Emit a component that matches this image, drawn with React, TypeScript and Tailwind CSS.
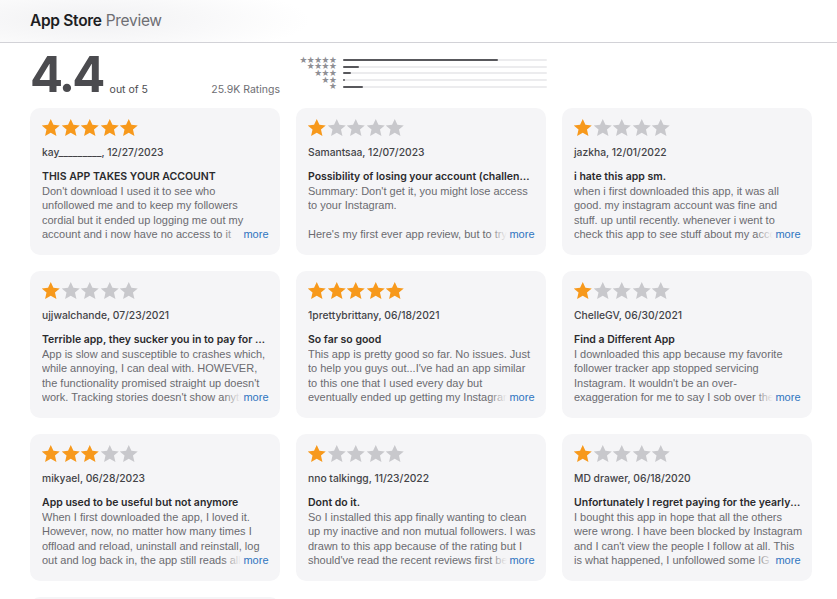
import React from 'react';

type Review = {
    rating: number;
    author: string;
    date: string;
    title: string;
    body: string;
};

const reviews: Review[] = [
    {
        rating: 5,
        author: 'kay_________',
        date: '12/27/2023',
        title: 'THIS APP TAKES YOUR ACCOUNT',
        body: "Don't download I used it to see who unfollowed me and to keep my followers cordial but it ended up logging me out my account and i now have no access to it anymore and the support team never answered.",
    },
    {
        rating: 1,
        author: 'Samantsaa',
        date: '12/07/2023',
        title: 'Possibility of losing your account (challenge required)',
        body: "Summary: Don't get it, you might lose access to your Instagram.\n\nHere's my first ever app review, but to try and warn others about it.",
    },
    {
        rating: 1,
        author: 'jazkha',
        date: '12/01/2022',
        title: 'i hate this app sm.',
        body: 'when i first downloaded this app, it was all good. my instagram account was fine and stuff. up until recently. whenever i went to check this app to see stuff about my account it logged me out.',
    },
    {
        rating: 1,
        author: 'ujjwalchande',
        date: '07/23/2021',
        title: 'Terrible app, they sucker you in to pay for features',
        body: "App is slow and susceptible to crashes which, while annoying, I can deal with. HOWEVER, the functionality promised straight up doesn't work. Tracking stories doesn't show anything at all.",
    },
    {
        rating: 5,
        author: '1prettybrittany',
        date: '06/18/2021',
        title: 'So far so good',
        body: "This app is pretty good so far. No issues. Just to help you guys out...I've had an app similar to this one that I used every day but\neventually ended up getting my Instagram blocked.",
    },
    {
        rating: 1,
        author: 'ChelleGV',
        date: '06/30/2021',
        title: 'Find a Different App',
        body: "I downloaded this app because my favorite follower tracker app stopped servicing Instagram. It wouldn't be an over-\nexaggeration for me to say I sob over the loss of it.",
    },
    {
        rating: 3,
        author: 'mikyael',
        date: '06/28/2023',
        title: 'App used to be useful but not anymore',
        body: 'When I first downloaded the app, I loved it. However, now, no matter how many times I offload and reload, uninstall and reinstall, log out and log back in, the app still reads all zeros.',
    },
    {
        rating: 1,
        author: 'nno talkingg',
        date: '11/23/2022',
        title: 'Dont do it.',
        body: "So I installed this app finally wanting to clean up my inactive and non mutual followers. I was drawn to this app because of the rating but I should've read the recent reviews first before paying.",
    },
    {
        rating: 1,
        author: 'MD drawer',
        date: '06/18/2020',
        title: 'Unfortunately I regret paying for the yearly subscription',
        body: "I bought this app in hope that all the others were wrong. I have been blocked by Instagram and I can't view the people I follow at all. This is what happened, I unfollowed some IG accounts.",
    },
    {
        rating: 1,
        author: 'anonymous',
        date: '05/02/2020',
        title: 'Not worth it',
        body: 'Stopped working after a week.',
    },
];

const histogram = [
    { stars: 5, pct: 76 },
    { stars: 4, pct: 8 },
    { stars: 3, pct: 4 },
    { stars: 2, pct: 1 },
    { stars: 1, pct: 10 },
];

const StarIcon = ({ filled, size }: { filled: boolean; size: number }) => (
    <svg width={size} height={size} viewBox="0 0 24 24" className={filled ? 'text-[#f7991c]' : 'text-[#c8c8cc]'}>
        <path
            fill="currentColor"
            d="M12 1.2l3.3 7.1 7.8.8-5.9 5.2 1.8 7.7L12 18l-7 4 1.8-7.7-5.9-5.2 7.8-.8z"
        />
    </svg>
);

const Stars = ({ rating }: { rating: number }) => (
    <div className="flex items-center -ml-[1px]">
        {[1, 2, 3, 4, 5].map(i => (
            <StarIcon key={i} filled={i <= rating} size={19.5} />
        ))}
    </div>
);

const ReviewCard = ({ review }: { review: Review }) => (
    <div className="bg-[#f5f5f7] rounded-[10px] h-[147px] pl-[12px] pr-[9.5px] pt-[10px] overflow-hidden">
        <Stars rating={review.rating} />
        <div className="mt-[7px] text-[10.3px] leading-[14px] text-[#434347] font-medium">
            {review.author}, {review.date}
        </div>
        <div className="mt-[10px] text-[10.5px] leading-[15px] font-semibold text-[#2a2a2d] truncate pr-[2px]">{review.title}</div>
        <div className="relative h-[58.4px] overflow-hidden font-['Liberation_Sans',sans-serif] text-[11px] leading-[14.6px] text-[#6b6b70]">
            <p className="whitespace-pre-line">{review.body}</p>
            <span className="absolute right-[2px] bottom-0 flex items-center h-[14.6px]">
                <span className="w-[18px] h-[14.6px] bg-gradient-to-r from-[#f5f5f7]/0 to-[#f5f5f7]" />
                <span className="bg-[#f5f5f7] pl-[2px] text-[#2f74c0]">more</span>
            </span>
        </div>
    </div>
);

export default function App() {
    return (
        <div className="min-h-screen bg-white text-[#1d1d1f]" style={{ fontFamily: 'Inter, "Noto Sans", sans-serif' }}>
            <header className="h-[43px] border-b border-[#d2d2d7] bg-[radial-gradient(ellipse_220px_40px_at_90px_20px,#f1f1f3,#ffffff)]">
                <div className="px-[30px] pt-[10px] text-[15.5px] leading-[22px] tracking-[-0.3px]">
                    <span className="font-semibold text-[#1d1d1f]">App Store</span>{' '}
                    <span className="text-[#6e6e73]">Preview</span>
                </div>
            </header>

            <main className="ml-[30px] w-[782px]">
                <section className="flex items-start pt-[10px] h-[65px]">
                    <div className="flex items-end w-[250px]">
                        <span className="text-[49px] leading-[44px] font-bold text-[#4b4b4f] tracking-[-2.8px]">4.4</span>
                        <span className="ml-[7px] mb-[1px] text-[10.5px] leading-[13px] text-[#4b4b4f]">out of 5</span>
                        <span className="ml-auto mb-[1px] text-[10.5px] leading-[13px] text-[#6e6e73]">25.9K Ratings</span>
                    </div>
                    <div className="ml-[16px] pt-[4px] flex flex-col w-[251px]">
                        {histogram.map(h => (
                            <div key={h.stars} className="flex items-center h-[6.6px]">
                                <div className="w-[40px] flex justify-end text-[8px] leading-[7px] text-[#8e8e93] tracking-[-1px]">
                                    {'★'.repeat(h.stars)}
                                </div>
                                <div className="ml-[7px] flex-1 h-[2px] bg-[#ececee] rounded-full">
                                    <div className="h-[2px] bg-[#58585c] rounded-full" style={{ width: `${h.pct}%` }} />
                                </div>
                            </div>
                        ))}
                    </div>
                </section>

                <section className="grid grid-cols-3 gap-x-[16px] gap-y-[16px]">
                    {reviews.map((r, i) => (
                        <ReviewCard key={i} review={r} />
                    ))}
                </section>
            </main>
        </div>
    );
}
